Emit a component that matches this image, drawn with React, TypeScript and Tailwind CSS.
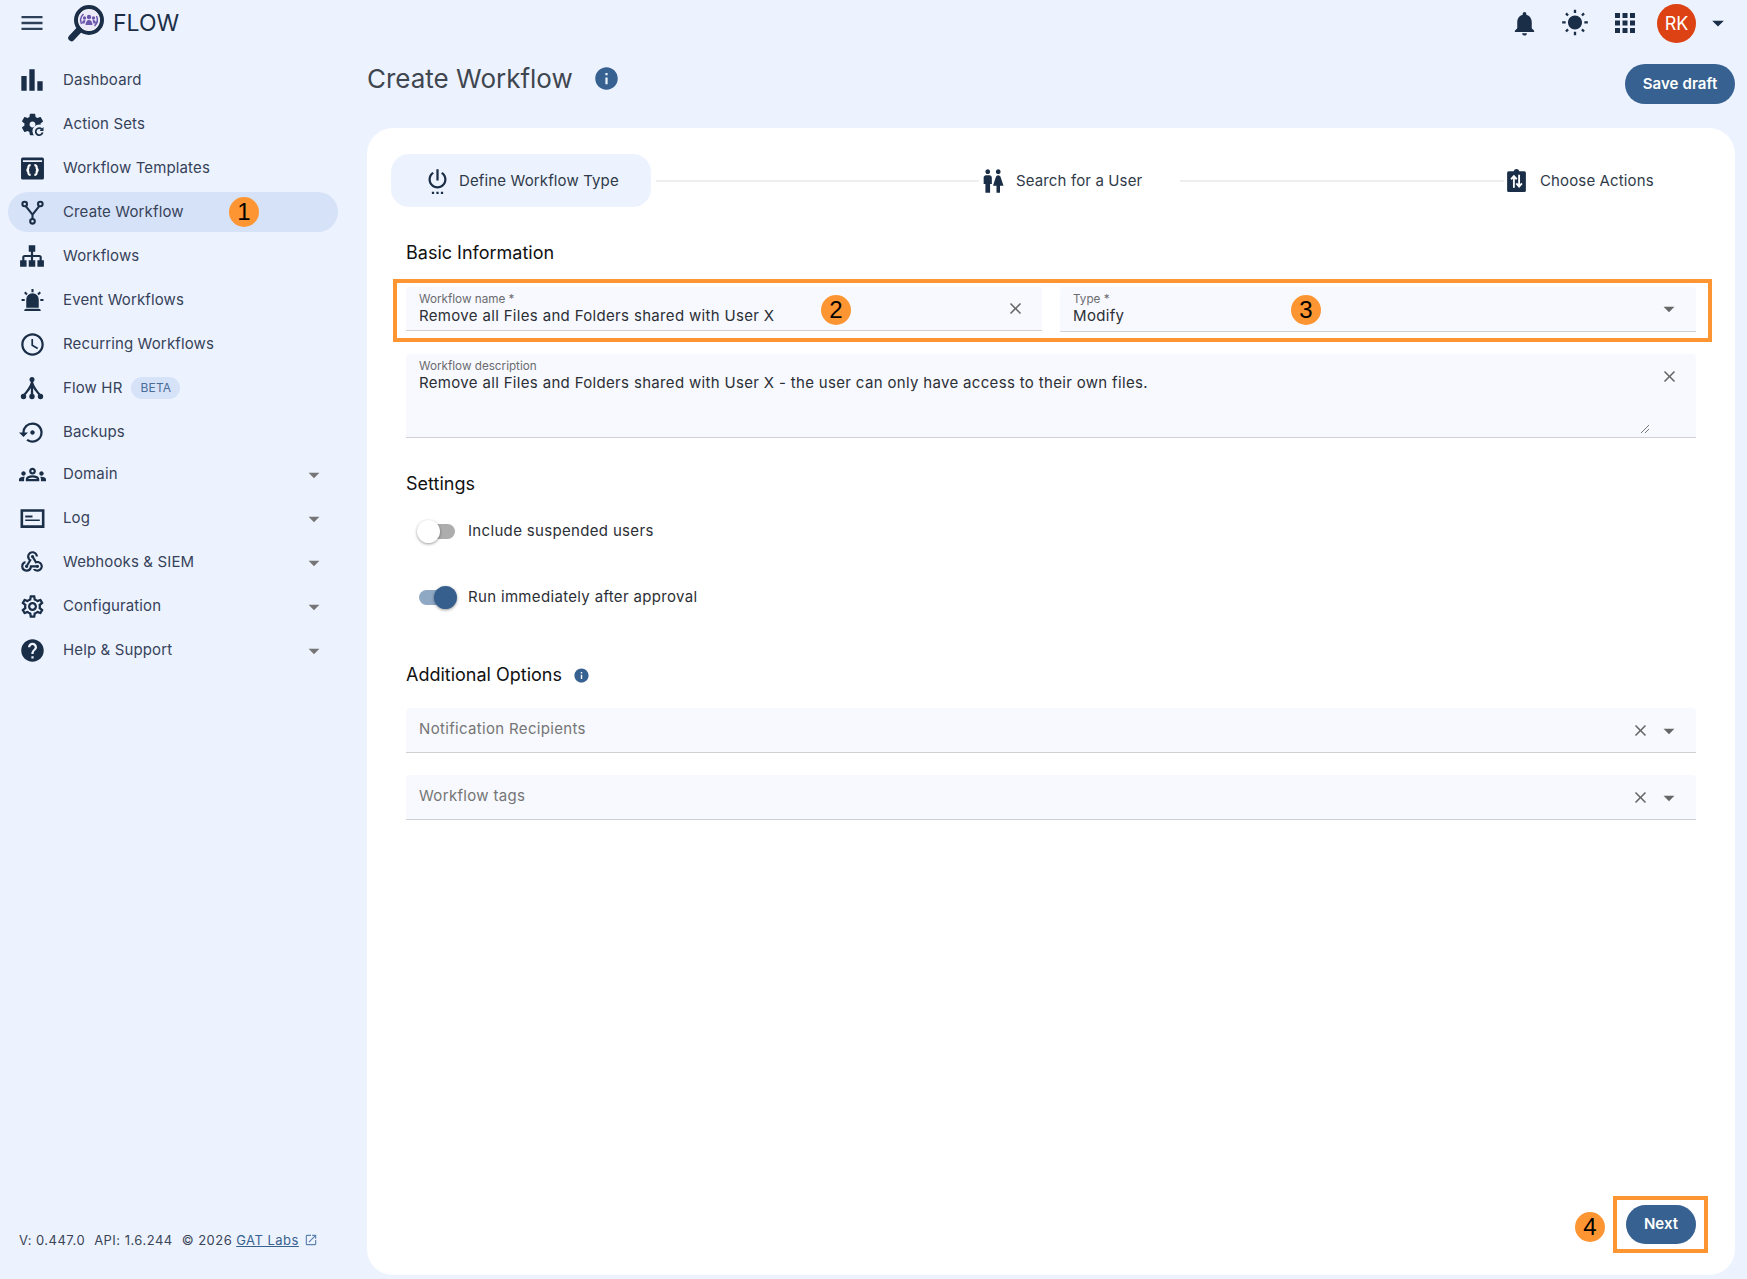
import type { ReactNode } from 'react'
import {
  MdApps,
  MdArrowDropDown,
  MdBarChart,
  MdClose,
  MdHelp,
  MdInfo,
  MdMenu,
  MdNotifications,
  MdOpenInNew,
  MdOutlineGroups,
  MdOutlineSchedule,
  MdOutlineSettings,
  MdOutlineWebhook,
  MdSettingsBackupRestore,
  MdSettingsPower,
  MdWbSunny,
  MdWc,
} from 'react-icons/md'

const ICON = '#1a2e48'

function CogRefresh() {
  return (
    <svg viewBox="0 0 24 24" className="h-[27px] w-[27px]" fill={ICON}>
      <path d="M19.14 12.94c.04-.3.06-.61.06-.94 0-.32-.02-.64-.07-.94l2.03-1.58c.18-.14.23-.41.12-.61l-1.92-3.32c-.12-.22-.37-.29-.59-.22l-2.39.96c-.5-.38-1.03-.7-1.62-.94l-.36-2.54c-.04-.24-.24-.41-.48-.41h-3.84c-.24 0-.43.17-.47.41l-.36 2.54c-.59.24-1.13.57-1.62.94l-2.39-.96c-.22-.08-.47 0-.59.22L2.74 8.87c-.12.21-.08.47.12.61l2.03 1.58c-.05.3-.09.63-.09.94s.02.64.07.94l-2.03 1.58c-.18.14-.23.41-.12.61l1.92 3.32c.12.22.37.29.59.22l2.39-.96c.5.38 1.03.7 1.62.94l.36 2.54c.05.24.24.41.48.41h3.84c.24 0 .44-.17.47-.41l.36-2.54c.59-.24 1.13-.56 1.62-.94l2.39.96c.22.08.47 0 .59-.22l1.92-3.32c.12-.22.07-.47-.12-.61l-2.01-1.58zM12 14.600c-1.430 0-2.600-1.170-2.600-2.600s1.170-2.600 2.600-2.600 2.600 1.170 2.600 2.600-1.170 2.600-2.600 2.600z" />
      <circle cx="18" cy="18" r="6" fill="#edf3fe" />
      <path d="M20.300 16.300a3.100 3.100 0 1 0 .7 2.700" fill="none" stroke={ICON} strokeWidth="1.600" />
      <path d="M21.800 14.300v3.500h-3.500z" />
    </svg>
  )
}

function WindowBraces() {
  return (
    <svg viewBox="0 0 24 24" className="h-[25px] w-[25px]" fill={ICON}>
      <path d="M2.500 1.500h19A1.500 1.500 0 0 1 23 3v18a1.500 1.500 0 0 1-1.500 1.500h-19A1.500 1.500 0 0 1 1 21V3a1.500 1.500 0 0 1 1.500-1.500zM2.800 4v1.800h18.400V4z" fillRule="evenodd" />
      <path d="M10.200 8.800c-2.200 0-2.200 1-2.200 2.500 0 1.200-.6 2-1.700 2.200 1.100.2 1.700 1 1.700 2.200 0 1.500 0 2.500 2.200 2.500M13.800 8.800c2.200 0 2.200 1 2.200 2.500 0 1.200.6 2 1.700 2.200-1.100.2-1.700 1-1.700 2.200 0 1.500 0 2.500-2.200 2.500" fill="none" stroke="#fff" strokeWidth="2.100" />
    </svg>
  )
}

function ForkIcon() {
  return (
    <svg viewBox="0 0 24 24" className="h-[25px] w-[25px]" fill="none" stroke={ICON} strokeWidth="2">
      <circle cx="4.500" cy="3.800" r="2.200" />
      <circle cx="19.500" cy="3.800" r="2.200" />
      <circle cx="12" cy="20.500" r="2.200" />
      <path d="M5.500 5.800 12 14l6.500-8.200M12 14v4.300" />
    </svg>
  )
}

function SitemapIcon() {
  return (
    <svg viewBox="0 0 24 24" className="h-[26px] w-[26px]" fill={ICON}>
      <path d="M9,2V8H11V11H5C3.89,11 3,11.89 3,13V16H1V22H7V16H5V13H11V16H9V22H15V16H13V13H19V16H17V22H23V16H21V13C21,11.89 20.11,11 19,11H13V8H15V2H9Z" />
    </svg>
  )
}

function SirenIcon() {
  return (
    <svg viewBox="0 0 24 24" className="h-[25px] w-[25px]" fill={ICON}>
      <path d="M6,6.9L3.87,4.78L5.28,3.37L7.4,5.5L6,6.9M13,1V4H11V1H13M20.13,4.78L18,6.9L16.6,5.5L18.72,3.37L20.13,4.78M4.5,10.5V12.5H1.5V10.5H4.5M19.5,10.5H22.5V12.5H19.5V10.5M6,20H18A2,2 0 0,1 20,22H4A2,2 0 0,1 6,20M12,5A6,6 0 0,1 18,11V19H6V11A6,6 0 0,1 12,5Z" />
    </svg>
  )
}

function FlowHrIcon() {
  return (
    <svg viewBox="0 0 24 24" className="h-[24px] w-[24px]" fill={ICON}>
      <circle cx="12" cy="3.500" r="2.500" />
      <circle cx="3.500" cy="20.500" r="2.700" />
      <circle cx="12" cy="20.500" r="2.700" />
      <circle cx="20.500" cy="20.500" r="2.700" />
      <path d="M12 4v16M12 6c-1 6-5 9-8.500 14M12 6c1 6 5 9 8.500 14" stroke={ICON} strokeWidth="2.300" fill="none" />
    </svg>
  )
}

function LogIcon() {
  return (
    <svg viewBox="0 0 24 24" className="h-[25px] w-[25px]" fill={ICON}>
      <path d="M0.500 3h23v18H.500zM3 5.500v13h18v-13z" fillRule="evenodd" />
      <path d="M5 9h7v2H5zM5 13h14v1.500H5z" />
    </svg>
  )
}

function ClipboardArrows() {
  return (
    <svg viewBox="0 0 24 24" className="h-[25px] w-[25px]" fill={ICON}>
      <path d="M4.500 3h4.800a2.800 2.800 0 0 1 5.400 0h4.800A1.500 1.500 0 0 1 21 4.500v17a1.500 1.500 0 0 1-1.500 1.500h-15A1.500 1.500 0 0 1 3 21.500v-17A1.500 1.500 0 0 1 4.500 3z" />
      <path d="M9.500 19V8.200M6.800 10.800l2.700-3 2.700 3M14.500 6.500v11M11.800 14.800l2.700 3 2.700-3" fill="none" stroke="#fff" strokeWidth="1.800" />
    </svg>
  )
}

function Logo() {
  return (
    <svg viewBox="0 0 36 37" className="h-[37px] w-[36px]">
      <path d="M11 25 3.500 33" stroke={ICON} strokeWidth="6.500" strokeLinecap="round" />
      <circle cx="21" cy="15" r="13" fill="#fff" stroke={ICON} strokeWidth="4" />
      <circle cx="21" cy="15" r="10.500" fill="#ece9f8" />
      <g fill="#6a58ad">
        <circle cx="21" cy="12" r="2.200" />
        <circle cx="16.500" cy="13" r="1.700" />
        <circle cx="25.500" cy="13" r="1.700" />
        <path d="M17.500 20c0-3 1.500-5 3.500-5s3.500 2 3.500 5zM14 18.500c0-2 1-3.500 2.500-3.500l1 .5-1 3zM28 18.500c0-2-1-3.500-2.500-3.500l-1 .5 1 3z" />
      </g>
      <path d="M13.500 19a9 9 0 0 1 2-10M28.500 11a9 9 0 0 1-2 10" fill="none" stroke="#6a58ad" strokeWidth="1.500" />
    </svg>
  )
}

type NavItem = { label: string; icon: ReactNode; caret?: boolean; active?: boolean; beta?: boolean; compact?: boolean }

const nav: NavItem[] = [
  { label: 'Dashboard', icon: <MdBarChart size={32} color={ICON} /> },
  { label: 'Action Sets', icon: <CogRefresh /> },
  { label: 'Workflow Templates', icon: <WindowBraces /> },
  { label: 'Create Workflow', icon: <ForkIcon />, active: true },
  { label: 'Workflows', icon: <SitemapIcon /> },
  { label: 'Event Workflows', icon: <SirenIcon /> },
  { label: 'Recurring Workflows', icon: <MdOutlineSchedule size={27} color={ICON} /> },
  { label: 'Flow HR', icon: <FlowHrIcon />, beta: true },
  { label: 'Backups', icon: <MdSettingsBackupRestore size={27} color={ICON} /> },
  { label: 'Domain', icon: <MdOutlineGroups size={27} color={ICON} />, caret: true, compact: true },
  { label: 'Log', icon: <LogIcon />, caret: true },
  { label: 'Webhooks & SIEM', icon: <MdOutlineWebhook size={26} color={ICON} />, caret: true },
  { label: 'Configuration', icon: <MdOutlineSettings size={27} color={ICON} />, caret: true },
  { label: 'Help & Support', icon: <MdHelp size={27} color={ICON} />, caret: true },
]

function Badge({ n, className }: { n: number; className: string }) {
  return (
    <span
      className={`absolute flex h-[30px] w-[30px] items-center justify-center rounded-full bg-[#fd9632] font-['Liberation_Sans',sans-serif] text-[24px] leading-none text-black ${className}`}
    >
      {n}
    </span>
  )
}

function Sidebar() {
  return (
    <aside className="flex w-[367px] shrink-0 flex-col pt-[12px]">
      {nav.map((item) => (
        <div key={item.label} className={`flex items-center ${item.compact ? 'h-[42px] pb-[2px]' : 'h-11'}`}>
          <div
            className={`relative ml-2 flex h-10 w-[330px] items-center rounded-full ${item.active ? 'bg-[#d6e2f8]' : ''}`}
          >
            <span className="flex w-[48px] shrink-0 justify-center">{item.icon}</span>
            <span className="ml-[7px] text-[15px] tracking-[0.13px] text-[#36425a]">{item.label}</span>
            {item.beta && (
              <span className="ml-[9px] rounded-full bg-[#d6e2f8] px-[9px] py-[2px] text-[12px] tracking-[0.2px] text-[#4a6c98]">
                BETA
              </span>
            )}
            {item.active && <Badge n={1} className="left-[221px] top-[5px]" />}
            {item.caret && (
              <span className="absolute left-[293px] top-[8px]">
                <MdArrowDropDown size={26} color="#757575" />
              </span>
            )}
          </div>
        </div>
      ))}
      <div className="mt-auto mb-[29px] flex items-center pl-[19px] text-[13px] tracking-[0.48px] text-[#3a4557]">
        <span>V: 0.447.0</span>
        <span className="ml-[9px]">API: 1.6.244</span>
        <span className="ml-[9px]">© 2026</span>
        <span className="ml-[4px] text-[#376190] underline">GAT Labs</span>
        <MdOpenInNew size={14} color="#5d82ac" className="ml-[5px]" />
      </div>
    </aside>
  )
}

function Field({ label, value, className, children }: { label: string; value: string; className: string; children: ReactNode }) {
  return (
    <div className={`relative rounded-t-[4px] border-b border-[#cfcfd4] bg-[#f7f9fe] pl-[13px] ${className}`}>
      <div className="pt-[6px] text-[11.7px] leading-[13px] text-[#6b6b70]">{label}</div>
      <div className="text-[15px] leading-[19px] tracking-[0.33px] text-[#2c2f36]">{value}</div>
      {children}
    </div>
  )
}

function Heading({ children, className }: { children: ReactNode; className: string }) {
  return <h2 className={`text-[18px] leading-[26px] text-[#111] ${className}`}>{children}</h2>
}

function Toggle({ on, label, className }: { on: boolean; label: string; className: string }) {
  return (
    <div className={`flex h-[22px] items-center ${className}`}>
      <div className={`relative ml-[13px] h-[15px] w-[36px] rounded-full ${on ? 'bg-[#8fa8c4]' : 'bg-[#adadad]'}`}>
        <span
          className={`absolute top-[-4px] h-[23px] w-[23px] rounded-full shadow-[0_1px_3px_rgba(0,0,0,0.4)] ${on ? 'left-[15px] bg-[#365f8e]' : 'left-[-2px] bg-white'}`}
        />
      </div>
      <span className="ml-[13px] text-[15px] tracking-[0.33px] text-[#2c2f36]">{label}</span>
    </div>
  )
}

function Dropdown({ label, className }: { label: string; className: string }) {
  return (
    <div className={`relative flex h-[45px] items-center rounded-t-[4px] border-b border-[#cfcfd4] bg-[#f7f9fe] pb-[2px] pl-[13px] ${className}`}>
      <span className="text-[15px] tracking-[0.33px] text-[#757575]">{label}</span>
      <MdClose size={19} color="#666" className="absolute right-[46px] top-[13px]" />
      <MdArrowDropDown size={26} color="#666" className="absolute right-[14px] top-[10px]" />
    </div>
  )
}

export default function App() {
  return (
    <div className="flex h-[1279px] w-full flex-col overflow-hidden bg-[#edf3fe] font-['Inter',sans-serif]">
      <header className="flex h-[46px] shrink-0 items-center">
        <MdMenu size={28} color="#2d4059" className="ml-[18px]" />
        <span className="ml-[22px]">
          <Logo />
        </span>
        <span className="ml-[9px] mt-[1px] text-[23px] text-[#1a2e48]">FLOW</span>
        <div className="ml-auto flex items-center">
          <MdNotifications size={29} color={ICON} />
          <MdWbSunny size={28} color={ICON} className="ml-[22px]" />
          <MdApps size={30} color={ICON} className="ml-[21px]" />
          <span className="ml-[17px] flex h-[39px] w-[39px] items-center justify-center rounded-full bg-[#dc4213] text-[18px] text-white">
            RK
          </span>
          <MdArrowDropDown size={28} color={ICON} className="ml-[8px] mr-[15px]" />
        </div>
      </header>
      <div className="flex min-h-0 flex-1">
        <Sidebar />
        <main className="flex min-w-0 flex-1 flex-col pr-[12px]">
          <div className="flex h-[82px] shrink-0 items-start">
            <h1 className="mt-[15px] text-[26px] leading-[36px] text-[#3f4650]">Create Workflow</h1>
            <MdInfo size={27} color="#376190" className="ml-[20px] mt-[19px]" />
            <button className="ml-auto mt-[18px] h-10 w-[110px] rounded-full bg-[#376190] text-[15px] font-semibold tracking-[0.1px] text-white">
              Save draft
            </button>
          </div>
          <section className="flex h-[1147px] flex-col rounded-[26px] bg-white px-[39px] pt-[26px] pb-[31px]">
            {/* stepper */}
            <div className="-ml-[15px] flex h-[53px] items-center text-[15px] tracking-[0.13px] text-[#2f3a4a]">
              <div className="flex h-full w-[260px] items-center rounded-[18px] bg-[#edf3fe] pl-[33px]">
                <MdSettingsPower size={27} color={ICON} />
                <span className="ml-[8px] mt-[2px]">Define Workflow Type</span>
              </div>
              <div className="ml-[5px] h-[2px] w-[323px] bg-[#eeeeee]" />
              <MdWc size={28} color={ICON} />
              <span className="ml-[9px] mt-[2px] w-[164px]">Search for a User</span>
              <div className="h-[2px] w-[324px] bg-[#eeeeee]" />
              <ClipboardArrows />
              <span className="ml-[11px] mt-[2px]">Choose Actions</span>
            </div>

            <Heading className="mt-[33px]">Basic Information</Heading>

            <div className="relative mt-[21px] grid grid-cols-2 items-start gap-[18px]">
              <div className="pointer-events-none absolute -top-2 -right-4 -bottom-[10px] -left-[13px] border-4 border-[#fd9632]" />
              <Field label="Workflow name *" value="Remove all Files and Folders shared with User X" className="h-[44px]">
                <MdClose size={19} color="#666" className="absolute right-[17px] top-[12px]" />
                <Badge n={2} className="left-[415px] top-[8px]" />
              </Field>
              <Field label="Type *" value="Modify" className="h-[45px]">
                <MdArrowDropDown size={26} color="#666" className="absolute right-[14px] top-[9px]" />
                <Badge n={3} className="left-[231px] top-[8px]" />
              </Field>
            </div>

            <Field
              label="Workflow description"
              value="Remove all Files and Folders shared with User X - the user can only have access to their own files."
              className="mt-[22px] h-[84px]"
            >
              <MdClose size={19} color="#666" className="absolute right-[17px] top-[13px]" />
              <svg viewBox="0 0 10 10" className="absolute right-[46px] bottom-[3px] h-[10px] w-[10px]" stroke="#777" strokeWidth="1">
                <path d="M1 9 9 1M5 9l4-4" />
              </svg>
            </Field>

            <Heading className="mt-[33px]">Settings</Heading>
            <Toggle on={false} label="Include suspended users" className="mt-[23px]" />
            <Toggle on label="Run immediately after approval" className="mt-[44px]" />

            <div className="mt-[54px] flex items-center">
              <Heading className="">Additional Options</Heading>
              <MdInfo size={17} color="#376190" className="ml-[11px]" />
            </div>

            <Dropdown label="Notification Recipients" className="mt-[20px]" />
            <Dropdown label="Workflow tags" className="mt-[22px]" />

            <div className="mt-auto flex justify-end">
              <div className="relative">
                <div className="pointer-events-none absolute -top-[9px] -right-3 -bottom-[9px] -left-[13px] border-4 border-[#fd9632]" />
                <Badge n={4} className="-left-[51px] top-[7px]" />
                <button className="h-[39px] w-[70px] rounded-full bg-[#376190] text-[15px] font-semibold text-white">
                  Next
                </button>
              </div>
            </div>
          </section>
        </main>
      </div>
    </div>
  )
}
